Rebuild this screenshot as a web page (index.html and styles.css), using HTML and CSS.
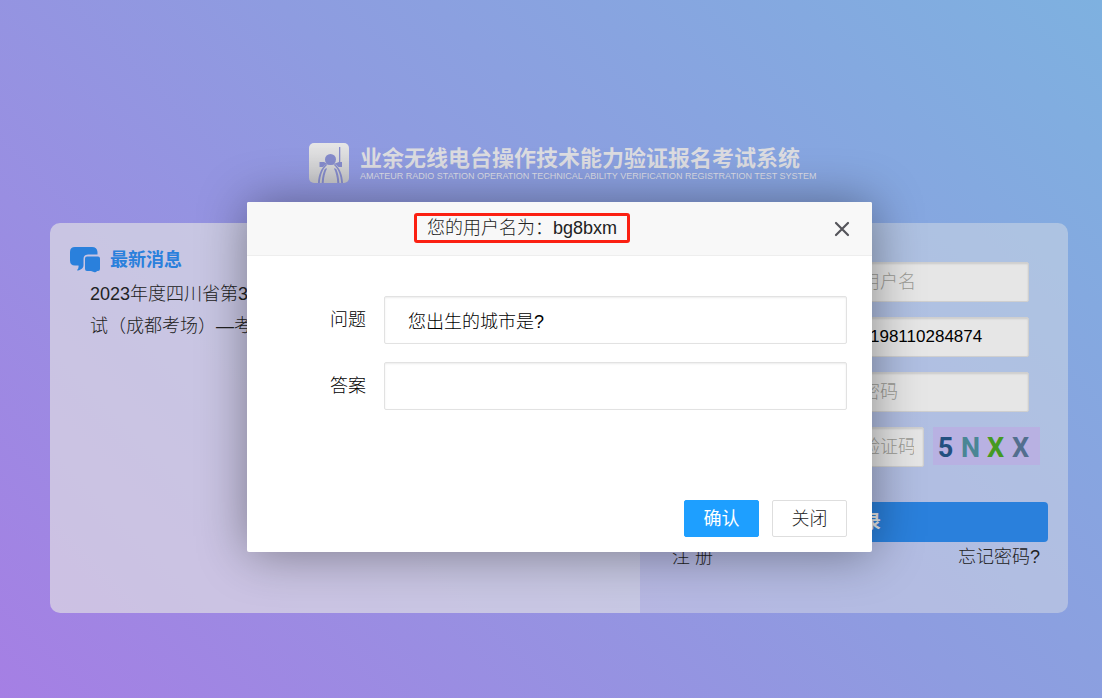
FILE: index.html
```html
<!DOCTYPE html>
<html lang="zh-CN">
<head>
<meta charset="utf-8">
<meta name="viewport" content="width=device-width, initial-scale=1">
<title>业余无线电台操作技术能力验证报名考试系统</title>
<link rel="stylesheet" href="styles.css">
</head>
<body>
<main class="page">
  <header class="brand">
    <svg class="brand-logo" viewBox="0 0 40 40" aria-hidden="true">
      <defs>
        <linearGradient id="silver" x1="0" y1="0" x2="0" y2="1">
          <stop offset="0" stop-color="#e6e6e6"/>
          <stop offset="1" stop-color="#c6c6c9"/>
        </linearGradient>
      </defs>
      <rect width="40" height="40" rx="5" fill="url(#silver)"/>
      <g fill="#858bcb">
        <circle cx="21.500" cy="16.500" r="5.500"/>
        <path d="M30 4h1.300v15H33v5h-3.500l-2.500-2.500h-10.500L14 24h-3.500v-5H15l3 1.500h8l4-1.500z"/>
        <path d="M17 21C11.500 26 9.500 32 9 40h1.800c.700-8 2.500-13.500 7.200-18z"/>
        <path d="M15.500 26.500q2-2 2.500-1C16 30 15 34 14.700 40h-2C13 34 14 30 15.500 26.500z"/>
        <path d="M26 21c5.500 5 7.500 11 8 19h-1.800c-.700-8-2.500-13.500-7.200-18z"/>
        <path d="M27.500 26.500q-2-2-2.500-1C27 30 28 34 28.300 40h2C30 34 29 30 27.500 26.500z"/>
      </g>
    </svg>
    <div class="brand-text">
      <h1 class="brand-name">业余无线电台操作技术能力验证报名考试系统</h1>
      <p class="brand-sub">AMATEUR RADIO STATION OPERATION TECHNICAL ABILITY VERIFICATION REGISTRATION TEST SYSTEM</p>
    </div>
  </header>

  <div class="panels">
    <section class="news">
      <h2 class="news-title">
        <svg class="news-icon" viewBox="0 0 30 26" aria-hidden="true">
          <path fill="#2a80dc" d="M5 0h17q5 0 5.500 5v2.500H18q-4.500 0-4.500 4.500v6q0 3-3 4.500-2 1.200-3.500.800Q9 21 8.500 18.500H5q-5 0-5-5V5q0-5 5-5z"/>
          <path fill="#2a80dc" d="M17 9.500h11q2 0 2 2V22q0 2-2 2h-1q-1 1.500-2.500 1.200L21 24h-4q-2 0-2-2V11.500q0-2 2-2z"/>
        </svg>
        最新消息
      </h2>
      <a class="news-item" href="#">2023年度四川省第3次考<br>试（成都考场）—考试</a>
    </section>

    <form class="login">
      <div class="fields">
        <input class="field" type="text" placeholder="请输入用户名" aria-label="用户名">
        <input class="field field-id" type="text" value="198110284874" aria-label="证件号码">
        <input class="field" type="password" placeholder="请输入密码" aria-label="密码">
        <div class="captcha-row">
          <input class="field" type="text" placeholder="请输入验证码" aria-label="验证码">
          <div class="captcha"><span class="c1">5</span><span class="c2">N</span><span class="c3">X</span><span class="c4">X</span></div>
        </div>
      </div>
      <button class="login-button" type="button">登　录</button>
      <div class="links"><a href="#">注 册</a><a href="#">忘记密码?</a></div>
    </form>
  </div>

  <div class="dialog" role="dialog" aria-labelledby="dialog-title">
    <div class="dialog-head">
      <h2 class="dialog-title" id="dialog-title">您的用户名为：bg8bxm</h2>
      <button class="dialog-close" type="button" aria-label="关闭窗口">
        <svg viewBox="0 0 18 18" aria-hidden="true"><path d="M3 3l12 12M15 3L3 15" fill="none" stroke="#55555b" stroke-width="2.200" stroke-linecap="round"/></svg>
      </button>
    </div>
    <form class="dialog-body">
      <div class="row">
        <label for="question">问题</label>
        <input id="question" type="text" value="您出生的城市是?" readonly>
      </div>
      <div class="row">
        <label for="answer">答案</label>
        <input id="answer" type="text">
      </div>
      <div class="actions">
        <button class="action primary" type="button">确认</button>
        <button class="action" type="button">关闭</button>
      </div>
    </form>
  </div>
</main>
</body>
</html>
```
FILE: styles.css
```css
* {
  box-sizing: border-box;
}

body {
  margin: 0;
  font: 300 18px/24px "Liberation Sans", "Noto Sans CJK SC", sans-serif;
  color: #222;
}

input,
button {
  font: inherit;
  color: inherit;
}

a {
  color: inherit;
  text-decoration: none;
}

.page {
  position: relative;
  min-height: 100vh;
  padding: 143px 34px 80px 50px;
  background: linear-gradient(45deg, #a57fe4 0%, #8e9ce0 54%, #7eb1e0 100%);
  overflow: hidden;
}

/* Brand */
.brand {
  display: flex;
  justify-content: center;
  gap: 11px;
  height: 40px;
  margin-bottom: 40px;
  padding-right: 3px;
}

.brand-logo {
  width: 40px;
  height: 40px;
}

.brand-text {
  width: 446px;
}

.brand-name {
  margin: 0;
  font: 700 22px/26px "Noto Sans CJK SC", sans-serif;
  color: #dcdce0;
  white-space: nowrap;
}

.brand-sub {
  margin: 0;
  font: 400 9px/14px "Liberation Sans", sans-serif;
  color: #dcdde6;
  white-space: nowrap;
}

/* Panels */
.panels {
  display: grid;
  grid-template-columns: minmax(0, 590fr) minmax(0, 428fr);
  min-height: 390px;
  border-radius: 10px;
  overflow: hidden;
}

.news {
  padding: 24px 20px;
  background: rgba(230, 230, 228, 0.62);
}

.news-title {
  display: flex;
  align-items: center;
  gap: 10px;
  margin: 0 0 5px;
  font-size: 18px;
  font-weight: 700;
  line-height: 22px;
  color: #2a80dc;
}

.news-icon {
  width: 30px;
  height: 26px;
}

.news-item {
  display: block;
  padding-left: 20px;
  line-height: 32px;
}

.login {
  padding: 39px 20px 20px;
  background: rgba(230, 230, 228, 0.42);
}

.fields {
  display: grid;
  grid-template-columns: minmax(0, 1fr);
  gap: 15px;
  padding: 0 19px 0 138px;
}

.field {
  width: 100%;
  height: 40px;
  padding: 0 9px;
  border: 1px solid #cfcfcf;
  border-radius: 2px;
  background: #e6e6e6;
  box-shadow: inset 0 1px 2px rgba(0, 0, 0, 0.12);
  color: #000;
}

.field::placeholder {
  color: #9c9c96;
}

.field-id {
  padding-left: 71px;
  font-size: 17px;
}

.captcha-row {
  display: grid;
  grid-template-columns: 126px 107px;
  gap: 9px;
}

.captcha {
  display: grid;
  grid-template-columns: repeat(4, 25px);
  height: 38px;
  background: #b8b1e2;
  font: 700 27px/42px Roboto, sans-serif;
  text-align: center;
}

.c1 { color: #23507f; }
.c2 { color: #4a8694; }
.c3 { color: #449a22; }
.c4 { color: #526f8e; }

.login-button {
  display: block;
  width: 100%;
  height: 40px;
  margin-top: 35px;
  border: 0;
  border-radius: 4px;
  background: #2a80dc;
  color: #e6e6e6;
  font-weight: 700;
}

.links {
  display: flex;
  justify-content: space-between;
  padding: 3px 8px 0 12px;
}

/* Dialog */
.dialog {
  position: absolute;
  top: 202px;
  left: calc(50% - 304px);
  width: 625px;
  border-radius: 2px;
  background: #fff;
  box-shadow: 1px 1px 50px rgba(0, 0, 0, 0.4);
}

.dialog-head {
  display: grid;
  grid-template-columns: 1fr auto 1fr;
  align-items: center;
  height: 54px;
  padding: 0 21px 0 22px;
  border-bottom: 1px solid #eee;
  border-radius: 2px 2px 0 0;
  background: #f8f8f8;
}

.dialog-title {
  grid-column: 2;
  margin: 0 76px 2px 0;
  padding: 0 10px;
  border: 3px solid #fb2012;
  border-radius: 3px;
  font-size: 18px;
  font-weight: 300;
  white-space: nowrap;
}

.dialog-close {
  justify-self: end;
  width: 18px;
  height: 18px;
  padding: 0;
  border: 0;
  background: none;
}

.dialog-close svg {
  display: block;
  width: 18px;
  height: 18px;
}

.dialog-body {
  display: grid;
  gap: 18px;
  padding: 40px 25px 15px 83px;
  color: #000;
}

.row {
  display: grid;
  grid-template-columns: 36px 1fr;
  align-items: center;
  gap: 18px;
}

.row input {
  width: 100%;
  height: 48px;
  padding: 0 23px;
  border: 1px solid #e2e2e2;
  border-radius: 2px;
  background: #fff;
  box-shadow: inset 0 1px 2px rgba(0, 0, 0, 0.08);
}

.actions {
  display: flex;
  justify-content: flex-end;
  gap: 13px;
  margin-top: 72px;
}

.action {
  width: 75px;
  height: 37px;
  padding: 0;
  border: 1px solid #dedede;
  border-radius: 2px;
  background: #fff;
  color: #222;
}

.primary {
  border-color: #1e9fff;
  background: #1e9fff;
  color: #fff;
  font-weight: 400;
}
```
